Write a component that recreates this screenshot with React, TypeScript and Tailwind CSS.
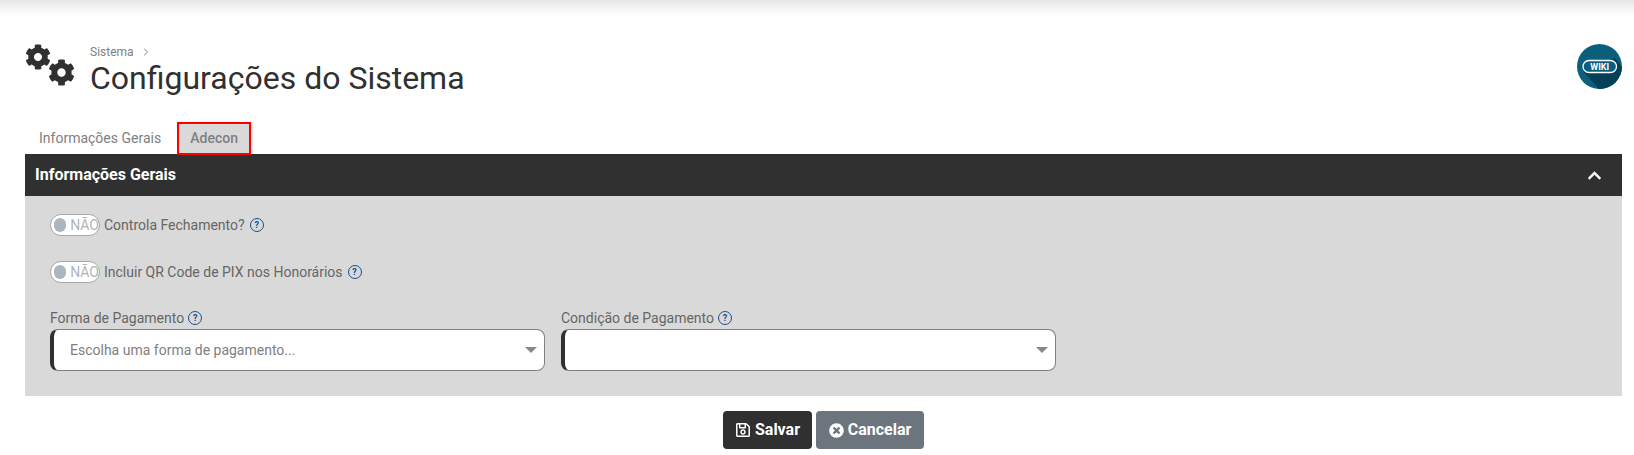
import { FaCog, FaChevronUp, FaRegSave, FaTimesCircle } from "react-icons/fa";
import { FiChevronRight } from "react-icons/fi";

const font = { fontFamily: "Roboto, sans-serif" };

function Help() {
    return (
        <span className="inline-flex items-center justify-center w-[14px] h-[14px] rounded-full border-[1.5px] border-[#1d4f8c] text-[#1d4f8c] text-[9px] font-bold leading-none">
            ?
        </span>
    );
}

function Toggle({ label }: { label: string }) {
    return (
        <div className="flex items-center h-[22px] gap-[1px]">
            <div className="flex items-center w-[50px] h-[22px] rounded-full bg-white border border-[#a8a8a8] pl-[2px]">
                <span className="w-[14px] h-[14px] ml-[1px] rounded-full bg-[#adb5bd]" />
                <span className="ml-[4px] text-[14px] leading-none text-[#adb5bd]">NÃO</span>
            </div>
            <span className="ml-[3px] text-[14px] text-[#666666]">{label}</span>
            <span className="ml-[4px] flex"><Help /></span>
        </div>
    );
}

function Select({ label, placeholder }: { label: string; placeholder?: string }) {
    return (
        <div className="w-[495px]">
            <div className="flex items-center gap-[4px] h-[20px] text-[14px] text-[#666666]">
                {label}
                <Help />
            </div>
            <div className="flex items-center justify-between h-[42px] mt-[1px] pl-[16px] pr-[7px] bg-white rounded-[8px] border border-[#808080] border-l-[4px] border-l-[#303030]">
                <span className="text-[14px] text-[#808080]">{placeholder}</span>
                <span className="w-0 h-0 border-x-[6px] border-x-transparent border-t-[6px] border-t-[#888888]" />
            </div>
        </div>
    );
}

function WikiBadge() {
    return (
        <svg width="45" height="45" viewBox="0 0 45 45">
            <defs>
                <clipPath id="wiki-circle">
                    <circle cx="22.5" cy="22.5" r="22.5" />
                </clipPath>
            </defs>
            <circle cx="22.5" cy="22.5" r="22.5" fill="#0b5f7c" />
            <path d="M6 27 L38 14 L50 30 L40 50 L26 50 Z" fill="#063f58" clipPath="url(#wiki-circle)" />
            <rect x="6" y="16.5" width="33.5" height="12" rx="6" fill="#0b5f7c" stroke="#ffffff" strokeWidth="1.3" />
            <text x="22.7" y="26" textAnchor="middle" fontSize="9" fontWeight="700" fill="#ffffff" fontFamily="Roboto, sans-serif">
                WIKI
            </text>
        </svg>
    );
}

export default function App() {
    return (
        <div className="w-[1634px] h-[455px] overflow-hidden bg-white" style={font}>
            <div className="h-[16px] bg-gradient-to-b from-[#e6e6e6] to-white" />

            <div className="pl-[25px] pr-[12px]">
                <div className="flex justify-between h-[106px] pt-[28px]">
                    <div className="flex">
                        <div className="flex w-[50px] h-[41px]">
                            <FaCog className="w-[26px] h-[26px] text-[#303030]" />
                            <FaCog className="w-[27px] h-[27px] -ml-[3px] mt-[15px] text-[#303030]" />
                        </div>
                        <div className="ml-[15px] mt-[1px]">
                            <div className="flex items-center gap-[6px] h-[14px] text-[12px] text-[#808080]">
                                Sistema
                                <FiChevronRight className="w-[12px] h-[12px]" />
                            </div>
                            <h1 className="text-[32px] leading-[38px] text-[#303030]">Configurações do Sistema</h1>
                        </div>
                    </div>
                    <WikiBadge />
                </div>

                <div className="flex h-[32px] -mt-[0px]">
                    <div className="flex items-center px-[14px] text-[14px] text-[#808080]">Informações Gerais</div>
                    <div className="flex items-center justify-center w-[74px] h-[33px] ml-[2px] bg-[#d9d9d9] border-[2.5px] border-[#ff0000] text-[14px] font-medium text-[#808080] shadow-[2px_0_2px_rgba(0,0,0,0.1)]">
                        Adecon
                    </div>
                </div>

                <div className="flex items-center justify-between h-[42px] pl-[10px] pr-[20px] bg-[#303030] text-white">
                    <span className="text-[16px] font-bold">Informações Gerais</span>
                    <FaChevronUp className="w-[15px] h-[15px]" />
                </div>

                <div className="h-[200px] bg-[#d9d9d9] pl-[25px] pt-[18px]">
                    <Toggle label="Controla Fechamento?" />
                    <div className="mt-[25px]">
                        <Toggle label="Incluir QR Code de PIX nos Honorários" />
                    </div>
                    <div className="flex gap-[16px] mt-[25px]">
                        <Select label="Forma de Pagamento" placeholder="Escolha uma forma de pagamento..." />
                        <Select label="Condição de Pagamento" />
                    </div>
                </div>

                <div className="flex justify-center gap-[4px] mt-[15px] pr-[-1px]">
                    <button className="flex items-center justify-center gap-[4px] w-[89px] h-[38px] rounded-[4px] bg-[#303030] text-white text-[16px] font-bold">
                        <FaRegSave className="w-[16px] h-[16px]" />
                        Salvar
                    </button>
                    <button className="flex items-center justify-center gap-[4px] w-[108px] h-[38px] rounded-[4px] bg-[#6c757d] text-white text-[16px] font-bold">
                        <FaTimesCircle className="w-[15px] h-[15px]" />
                        Cancelar
                    </button>
                </div>
            </div>
        </div>
    );
}
